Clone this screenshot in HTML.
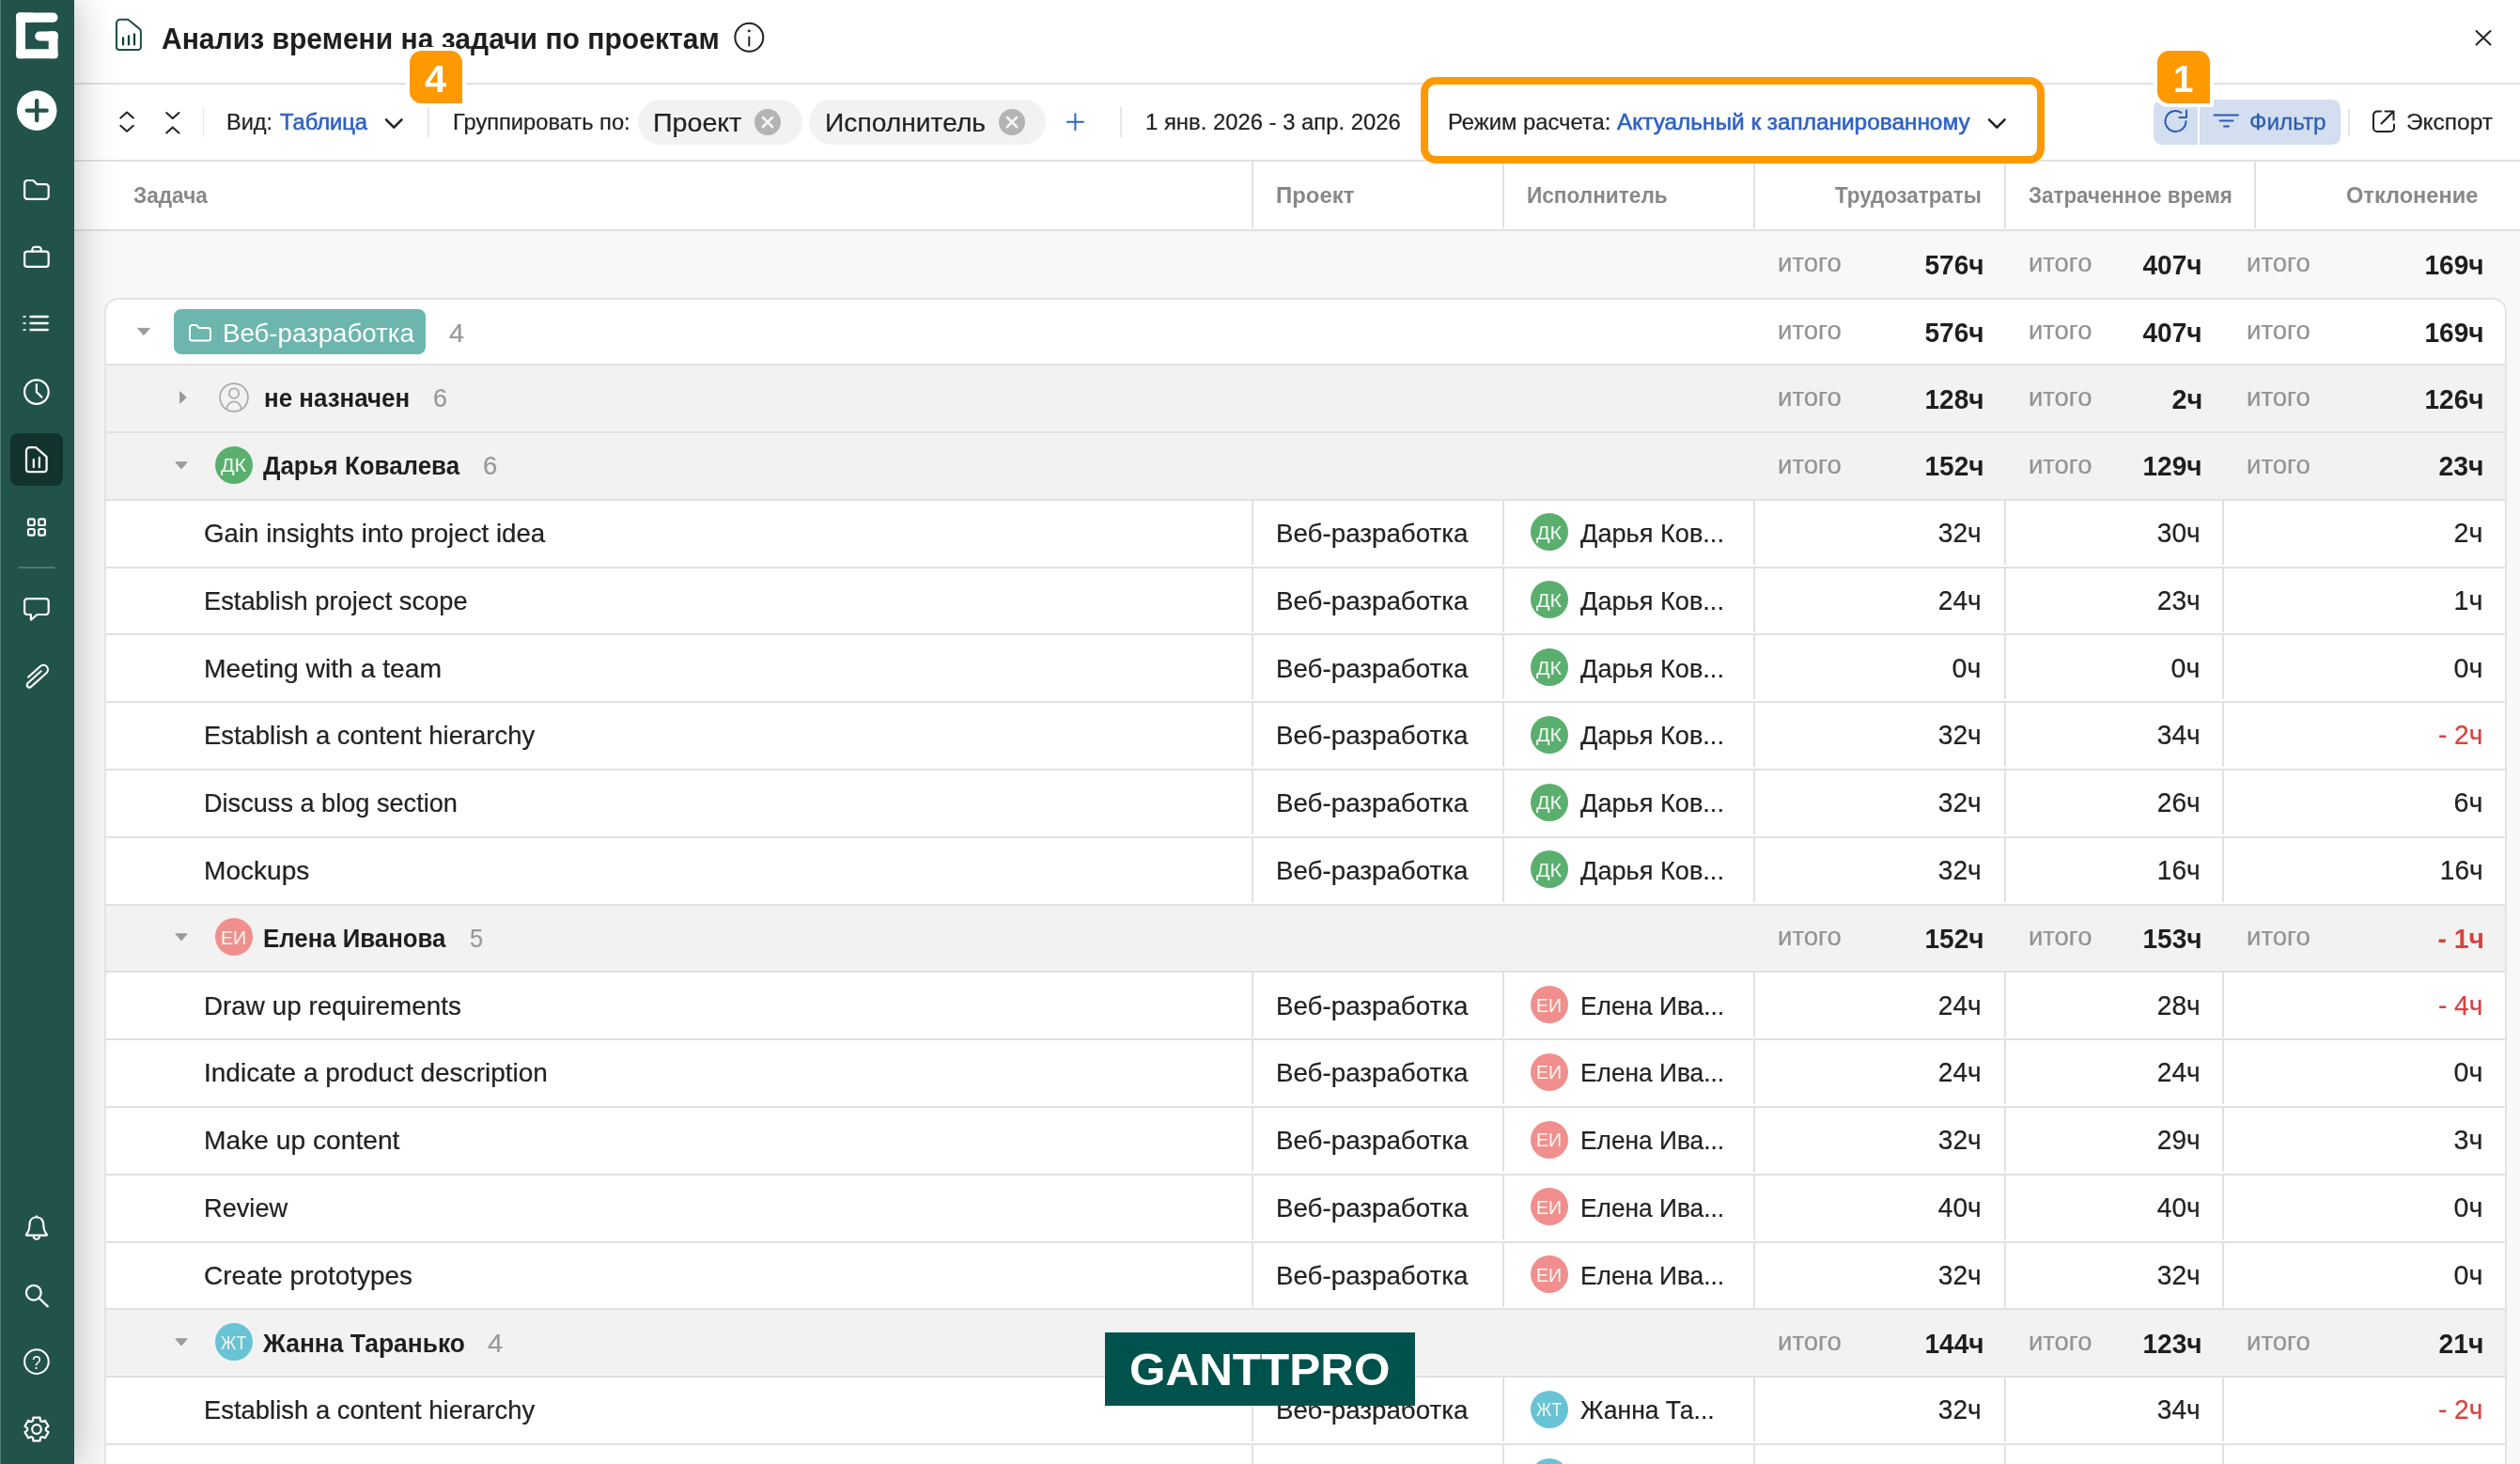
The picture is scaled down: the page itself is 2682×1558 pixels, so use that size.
<!DOCTYPE html>
<html lang="ru"><head><meta charset="utf-8"><title>Анализ времени на задачи по проектам</title>
<style>
html,body{margin:0;padding:0;}
body{width:2682px;height:1558px;overflow:hidden;position:relative;background:#f8f8f8;font-family:"Liberation Sans",sans-serif;}
#root{position:absolute;left:0;top:0;width:2682px;height:1558px;overflow:hidden;will-change:transform;}
.t{position:absolute;white-space:nowrap;line-height:1;display:inline-block;}
.wm{letter-spacing:0;}
</style></head><body><div id="root">
<div class="" style="position:absolute;left:79.00px;top:0.00px;width:2603.00px;height:88.00px;background:#fff;"></div>
<div class="" style="position:absolute;left:79.00px;top:88.00px;width:2603.00px;height:2.00px;background:#e1e1e1;"></div>
<div class="" style="position:absolute;left:79.00px;top:90.00px;width:2603.00px;height:80.00px;background:#fff;"></div>
<div class="" style="position:absolute;left:79.00px;top:169.60px;width:2603.00px;height:2.00px;background:#e1e1e1;"></div>
<div class="" style="position:absolute;left:79.00px;top:172.00px;width:2603.00px;height:71.50px;background:#fff;"></div>
<div class="" style="position:absolute;left:79.00px;top:243.50px;width:2603.00px;height:2.00px;background:#e1e1e1;"></div>
<div class="" style="position:absolute;left:1332.00px;top:172.00px;width:2.00px;height:71.00px;background:#e1e1e1;"></div>
<div class="" style="position:absolute;left:1599.00px;top:172.00px;width:2.00px;height:71.00px;background:#e1e1e1;"></div>
<div class="" style="position:absolute;left:1866.00px;top:172.00px;width:2.00px;height:71.00px;background:#e1e1e1;"></div>
<div class="" style="position:absolute;left:2133.00px;top:172.00px;width:2.00px;height:71.00px;background:#e1e1e1;"></div>
<div class="" style="position:absolute;left:2399.00px;top:172.00px;width:2.00px;height:71.00px;background:#e1e1e1;"></div>
<svg style="position:absolute;left:120px;top:16px" width="36" height="42" viewBox="0 0 36 42" fill="none" stroke="#1d5048" stroke-width="2" stroke-linecap="round" stroke-linejoin="round"><path d="M8 4.8 H15.4 Q16.4 4.8 17.2 5.5 L28.4 14.6 Q29.9 15.9 29.9 18 V34 a3 3 0 0 1 -3 3 H7 a3 3 0 0 1 -3 -3 V8.8 a4 4 0 0 1 4 -4 Z"/><path d="M11 24.4 V31.4 M17 22.4 V31.4 M23 20.3 V31.4" stroke-width="2.3" stroke="#123f38"/></svg>
<span class="t " style="top:25.01px;font-size:32px;color:#1e1e1e;font-weight:700;left:172.34px;transform-origin:0 50%;transform:scaleX(0.9395);">Анализ времени на задачи по проектам</span>
<svg style="position:absolute;left:780px;top:23px" width="34" height="34" viewBox="0 0 34 34" fill="none" stroke="#222" stroke-width="2" stroke-linecap="round"><circle cx="17.3" cy="16.8" r="14.95"/><path d="M17.3 16.5 V25.5"/><circle cx="17.3" cy="9.9" r="1.45" fill="#222" stroke="none"/></svg>
<svg style="position:absolute;left:2633px;top:30px" width="20" height="20" viewBox="0 0 20 20" fill="none" stroke="#222" stroke-width="2" stroke-linecap="round"><path d="M2.5 3 L17.5 17.5 M17.5 3 L2.5 17.5"/></svg>
<svg style="position:absolute;left:125px;top:116px" width="20" height="28" viewBox="0 0 20 28" fill="none" stroke="#222" stroke-width="2" stroke-linecap="round" stroke-linejoin="round"><path d="M3.3 9.6 L10.1 3.5 L16.9 9.6 M3.3 17.8 L10.1 23.7 L16.9 17.8"/></svg>
<svg style="position:absolute;left:174px;top:116px" width="20" height="28" viewBox="0 0 20 28" fill="none" stroke="#222" stroke-width="2" stroke-linecap="round" stroke-linejoin="round"><path d="M3.2 4 L9.75 10.1 L16.5 4 M3.2 25.5 L9.75 19.4 L16.5 25.5"/></svg>
<div class="" style="position:absolute;left:215.60px;top:114.00px;width:1.80px;height:31.50px;background:#e7e7e7;"></div>
<span class="t " style="top:118.48px;font-size:24px;color:#222222;-webkit-text-stroke:0.22px #222222;left:241.28px;transform-origin:0 50%;transform:scaleX(0.9811);">Вид:</span>
<span class="t " style="top:118.48px;font-size:24px;color:#2f62c4;-webkit-text-stroke:0.6px #2f62c4;left:298.48px;transform-origin:0 50%;transform:scaleX(0.9887);">Таблица</span>
<svg style="position:absolute;left:406px;top:122px" width="26" height="18" viewBox="0 0 26 18" fill="none" stroke="#222" stroke-width="2.6" stroke-linecap="round" stroke-linejoin="round"><path d="M5 5.3 L13.25 13.6 L21.5 5.3"/></svg>
<div class="" style="position:absolute;left:455.20px;top:114.00px;width:1.80px;height:31.50px;background:#e7e7e7;"></div>
<span class="t " style="top:118.48px;font-size:24px;color:#222222;-webkit-text-stroke:0.22px #222222;left:481.88px;transform-origin:0 50%;transform:scaleX(0.9861);">Группировать по:</span>
<div class="" style="position:absolute;left:678.60px;top:105.50px;width:175.00px;height:48.00px;background:#f2f2f2;border-radius:24px;"></div>
<span class="t " style="top:116.70px;font-size:28px;color:#222222;-webkit-text-stroke:0.22px #222222;left:695.16px;transform-origin:0 50%;transform:scaleX(1.0221);">Проект</span>
<svg style="position:absolute;left:803.0px;top:115.6px" width="28" height="28" viewBox="0 0 28 28"><circle cx="14" cy="14" r="14" fill="#b4b4b4"/><path d="M9 9 L19 19 M19 9 L9 19" stroke="#f6f6f6" stroke-width="2.6" stroke-linecap="round"/></svg>
<div class="" style="position:absolute;left:861.20px;top:105.50px;width:252.00px;height:48.00px;background:#f2f2f2;border-radius:24px;"></div>
<span class="t " style="top:116.70px;font-size:28px;color:#222222;-webkit-text-stroke:0.22px #222222;left:877.76px;transform-origin:0 50%;transform:scaleX(1.0076);">Исполнитель</span>
<svg style="position:absolute;left:1062.8px;top:115.6px" width="28" height="28" viewBox="0 0 28 28"><circle cx="14" cy="14" r="14" fill="#b4b4b4"/><path d="M9 9 L19 19 M19 9 L9 19" stroke="#f6f6f6" stroke-width="2.6" stroke-linecap="round"/></svg>
<svg style="position:absolute;left:1132px;top:117px" width="25" height="25" viewBox="0 0 25 25" fill="none" stroke="#2f62c4" stroke-width="2" stroke-linecap="round"><path d="M12.4 4.2 V21.2 M3.9 12.7 H20.9"/></svg>
<div class="" style="position:absolute;left:1192.40px;top:114.00px;width:1.80px;height:31.50px;background:#e7e7e7;"></div>
<span class="t " style="top:118.48px;font-size:24px;color:#222222;-webkit-text-stroke:0.22px #222222;left:1218.88px;transform-origin:0 50%;transform:scaleX(0.9939);">1 янв. 2026 - 3 апр. 2026</span>
<div class="" style="position:absolute;left:1512.00px;top:82.40px;width:663.80px;height:91.30px;border:8px solid #ff9900;border-radius:16px;background:#fff;box-sizing:border-box;"></div>
<span class="t " style="top:118.48px;font-size:24px;color:#222222;-webkit-text-stroke:0.22px #222222;left:1540.58px;transform-origin:0 50%;transform:scaleX(0.9912);">Режим расчета:</span>
<span class="t " style="top:118.48px;font-size:24px;color:#2f62c4;-webkit-text-stroke:0.6px #2f62c4;left:1720.88px;transform-origin:0 50%;transform:scaleX(1.0156);">Актуальный к запланированному</span>
<svg style="position:absolute;left:2112px;top:122px" width="26" height="18" viewBox="0 0 26 18" fill="none" stroke="#222" stroke-width="2.6" stroke-linecap="round" stroke-linejoin="round"><path d="M5 5.3 L13.3 13.6 L21.6 5.3"/></svg>
<div class="" style="position:absolute;left:2291.70px;top:106.00px;width:47.80px;height:47.50px;background:#d3def0;border-radius:9px 0 0 9px;"></div>
<div class="" style="position:absolute;left:2341.40px;top:106.00px;width:149.60px;height:47.50px;background:#d3def0;border-radius:0 9px 9px 0;"></div>
<svg style="position:absolute;left:2300px;top:113px" width="32" height="32" viewBox="0 0 32 32" fill="none" stroke="#2d5cae" stroke-width="2" stroke-linecap="round" stroke-linejoin="round"><path d="M26.5 16 A11 11 0 1 1 21.5 6.8"/><path d="M27 4.5 V12 H19.5" /></svg>
<svg style="position:absolute;left:2353px;top:118px" width="32" height="22" viewBox="0 0 32 22" fill="none" stroke="#2d5cae" stroke-width="2" stroke-linecap="round"><path d="M3.5 4.5 H29 M9.5 10.6 H23.5 M14 16.6 H19"/></svg>
<span class="t " style="top:117.58px;font-size:24px;color:#2d5cae;-webkit-text-stroke:0.3px #2d5cae;left:2393.58px;transform-origin:0 50%;transform:scaleX(1.0113);">Фильтр</span>
<div class="" style="position:absolute;left:2499.10px;top:115.50px;width:1.80px;height:28.00px;background:#e7e7e7;"></div>
<svg style="position:absolute;left:2523px;top:115px" width="28" height="28" viewBox="0 0 28 28" fill="none" stroke="#222" stroke-width="2" stroke-linecap="round" stroke-linejoin="round"><path d="M11 3.5 H7 a4 4 0 0 0 -4 4 V21 a4 4 0 0 0 4 4 H21 a4 4 0 0 0 4 -4 V17.5"/><path d="M15.5 3.5 H24.5 V12.5 M24 4 L11.5 16.5"/></svg>
<span class="t " style="top:118.48px;font-size:24px;color:#222222;-webkit-text-stroke:0.22px #222222;left:2560.78px;transform-origin:0 50%;transform:scaleX(1.0196);">Экспорт</span>
<div class="" style="position:absolute;left:432.20px;top:49.80px;width:64.00px;height:64.00px;background:#fff;border-radius:16px 16px 0 16px;"></div>
<div class="" style="position:absolute;left:436.20px;top:53.80px;width:56.00px;height:56.00px;background:#ff9900;border-radius:12.5px 12.5px 0 12.5px;"></div>
<span class="t " style="top:63.94px;font-size:40px;color:#fff;font-weight:700;left:452.10px;transform-origin:0 50%;transform:scaleX(1.0384);">4</span>
<div class="" style="position:absolute;left:2292.20px;top:50.00px;width:64.00px;height:64.00px;background:#fff;border-radius:16px 16px 0 16px;"></div>
<div class="" style="position:absolute;left:2296.20px;top:54.00px;width:56.00px;height:56.00px;background:#ff9900;border-radius:12.5px 12.5px 0 12.5px;"></div>
<span class="t " style="top:63.94px;font-size:40px;color:#fff;font-weight:700;left:2312.80px;transform-origin:0 50%;transform:scaleX(0.9620);">1</span>
<span class="t " style="top:196.08px;font-size:24px;color:#888888;font-weight:700;left:142.28px;transform-origin:0 50%;transform:scaleX(0.9425);">Задача</span>
<span class="t " style="top:196.08px;font-size:24px;color:#888888;font-weight:700;left:1358.28px;transform-origin:0 50%;transform:scaleX(0.9971);">Проект</span>
<span class="t " style="top:196.08px;font-size:24px;color:#888888;font-weight:700;left:1624.98px;transform-origin:0 50%;transform:scaleX(0.9432);">Исполнитель</span>
<span class="t " style="top:196.08px;font-size:24px;color:#888888;font-weight:700;left:1952.68px;transform-origin:0 50%;transform:scaleX(0.9304);">Трудозатраты</span>
<span class="t " style="top:196.08px;font-size:24px;color:#888888;font-weight:700;left:2158.78px;transform-origin:0 50%;transform:scaleX(0.9318);">Затраченное время</span>
<span class="t " style="top:196.08px;font-size:24px;color:#888888;font-weight:700;left:2496.68px;transform-origin:0 50%;transform:scaleX(0.9831);">Отклонение</span>
<span class="t " style="top:267.24px;font-size:27px;color:#939393;-webkit-text-stroke:0.22px #939393;left:1891.79px;transform-origin:0 50%;transform:scaleX(1.0209);">итого</span>
<span class="t " style="top:267.24px;font-size:27px;color:#939393;-webkit-text-stroke:0.22px #939393;left:2159.29px;transform-origin:0 50%;transform:scaleX(1.0164);">итого</span>
<span class="t " style="top:267.24px;font-size:27px;color:#939393;-webkit-text-stroke:0.22px #939393;left:2391.49px;transform-origin:0 50%;transform:scaleX(1.0224);">итого</span>
<span class="t " style="top:267.98px;font-size:29.2px;color:#1e1e1e;font-weight:700;right:570.12px;transform-origin:100% 50%;transform:scaleX(0.9618);">576ч</span>
<span class="t " style="top:267.98px;font-size:29.2px;color:#1e1e1e;font-weight:700;right:338.02px;transform-origin:100% 50%;transform:scaleX(0.9618);">407ч</span>
<span class="t " style="top:267.98px;font-size:29.2px;color:#1e1e1e;font-weight:700;right:38.42px;transform-origin:100% 50%;transform:scaleX(0.9618);">169ч</span>
<div id="sb" style="position:absolute;left:0;top:0;width:79px;height:1558px;background:#22534b;box-shadow:2px 0 40px rgba(0,0,0,.25);"></div><div style="position:absolute;left:0;top:0;width:1.2px;height:1558px;background:#4d7c74;"></div>
<svg style="position:absolute;left:0px;top:0px" width="79" height="76" viewBox="0 0 79 76" fill="#fff"><rect x="17.2" y="13.6" width="44.3" height="10.1" rx="5"/><rect x="17.2" y="13.6" width="20" height="10.1" rx="3.5"/><rect x="17.2" y="13.6" width="9.8" height="48.6" rx="3.5"/><rect x="17.2" y="52.2" width="44.3" height="10" rx="3.5"/><rect x="51.7" y="33.5" width="9.8" height="28.7" rx="3.5"/><rect x="37.2" y="33.5" width="24.3" height="10" rx="5"/><rect x="48" y="33.5" width="13.5" height="10" rx="3.5"/></svg>
<svg style="position:absolute;left:17px;top:95px" width="45" height="45" viewBox="0 0 45 45"><circle cx="22.2" cy="22.6" r="21.3" fill="#fff"/><path d="M22.2 12.2 V33 M11.9 22.6 H32.6" stroke="#22534b" stroke-width="4.4" stroke-linecap="round"/></svg>
<svg style="position:absolute;left:23.3px;top:186.3px" width="32" height="32" viewBox="0 0 32 32" fill="none" stroke="#fff" stroke-width="2.2" stroke-linecap="round" stroke-linejoin="round"><path d="M3.1 9 a3 3 0 0 1 3 -3 H12.2 L16.6 10.1 H25.7 a3 3 0 0 1 3 3 V22.8 a3 3 0 0 1 -3 3 H6.1 a3 3 0 0 1 -3 -3 Z"/></svg>
<svg style="position:absolute;left:23.3px;top:257.3px" width="32" height="32" viewBox="0 0 32 32" fill="none" stroke="#fff" stroke-width="2.2" stroke-linecap="round" stroke-linejoin="round"><rect x="3.1" y="10.6" width="25.6" height="16.3" rx="3"/><path d="M11.4 10.6 V8.3 a2.5 2.5 0 0 1 2.5 -2.5 H18.2 a2.5 2.5 0 0 1 2.5 2.5 V10.6"/></svg>
<svg style="position:absolute;left:23.3px;top:328.0px" width="32" height="32" viewBox="0 0 32 32" fill="none" stroke="#fff" stroke-width="2" stroke-linecap="round" stroke-linejoin="round"><path d="M9.4 9 H27.8 M9.4 16 H27.8 M9.4 23 H27.8" stroke-width="2.3"/><path d="M2.6 9 H3.4 M2.6 16 H3.4 M2.6 23 H3.4" stroke-width="2.2" stroke-linecap="square" opacity=".85"/></svg>
<svg style="position:absolute;left:23.3px;top:400.7px" width="32" height="32" viewBox="0 0 32 32" fill="none" stroke="#fff" stroke-width="2.2" stroke-linecap="round" stroke-linejoin="round"><circle cx="15.9" cy="16.1" r="12.8"/><path d="M15.9 8.2 V16.2 L21.4 21.6"/></svg>
<div class="" style="position:absolute;left:11.30px;top:460.80px;width:55.80px;height:55.80px;background:#13342e;border-radius:8px;"></div>
<svg style="position:absolute;left:23.3px;top:472.7px" width="32" height="32" viewBox="0 0 32 32" fill="none" stroke="#fff" stroke-width="2.2" stroke-linecap="round" stroke-linejoin="round"><path d="M8.5 3.2 H15.1 L26.6 13.2 V26.2 a3 3 0 0 1 -3 3 H8 a3 3 0 0 1 -3 -3 V6.7 a3.5 3.5 0 0 1 3.5 -3.5 Z"/><path d="M12.8 16.2 V24.2 M18.9 13.9 V24.2"/></svg>
<svg style="position:absolute;left:23.3px;top:544.7px" width="32" height="32" viewBox="0 0 32 32" fill="none" stroke="#fff" stroke-width="2.2" stroke-linecap="round" stroke-linejoin="round"><rect x="7" y="7.3" width="6.7" height="6.7" rx="1.6"/><rect x="18.2" y="7.3" width="6.7" height="6.7" rx="1.6"/><rect x="7" y="18" width="6.7" height="6.7" rx="1.6"/><rect x="18.2" y="18" width="6.7" height="6.7" rx="1.6"/></svg>
<div class="" style="position:absolute;left:19.30px;top:603.40px;width:40.00px;height:2.00px;background:#4a7a72;border-radius:1px;"></div>
<svg style="position:absolute;left:23.3px;top:632.2px" width="32" height="32" viewBox="0 0 32 32" fill="none" stroke="#fff" stroke-width="2.2" stroke-linecap="round" stroke-linejoin="round"><path d="M6.1 5.2 H25.7 a3 3 0 0 1 3 3 V19 a3 3 0 0 1 -3 3 H16.7 L9.9 27.6 V22 H6.1 a3 3 0 0 1 -3 -3 V8.2 a3 3 0 0 1 3 -3 Z"/></svg>
<svg style="position:absolute;left:0;top:690px" width="79" height="60" viewBox="0 690 79 60" fill="none" stroke="#fff" stroke-width="2.1" stroke-linecap="round" stroke-linejoin="round"><g transform="translate(31,726.4) rotate(-42)"><path d="M3.2 -4.9 H20.5 A4.8 4.8 0 0 1 20.5 4.7 H-1.5 A2.6 2.6 0 0 1 -1.5 -0.5 H17.5"/></g></svg>
<svg style="position:absolute;left:23.3px;top:1291.0px" width="32" height="32" viewBox="0 0 32 32" fill="none" stroke="#fff" stroke-width="2.1" stroke-linecap="round" stroke-linejoin="round"><path d="M15.9 4.3 c-4.6 0 -7.4 3.4 -7.4 8 c0 5 -0.6 7 -3.4 10.2 c-0.5 0.6 -0.2 1.1 0.5 1.1 H26.2 c0.7 0 1 -0.5 0.5 -1.1 c-2.8 -3.2 -3.4 -5.2 -3.4 -10.2 c0 -4.6 -2.8 -8 -7.4 -8 Z"/><path d="M15.9 4.3 V3.4"/><path d="M12.6 24.2 a3.3 3.6 0 0 0 6.6 0"/></svg>
<svg style="position:absolute;left:23.3px;top:1362.7px" width="32" height="32" viewBox="0 0 32 32" fill="none" stroke="#fff" stroke-width="2.2" stroke-linecap="round" stroke-linejoin="round"><circle cx="12.8" cy="12.7" r="7.9"/><path d="M18.5 18.4 L27.8 27.4"/></svg>
<svg style="position:absolute;left:23.3px;top:1433.1px" width="32" height="32" viewBox="0 0 32 32" fill="none" stroke="#fff" stroke-width="2"><circle cx="15.9" cy="16.1" r="12.8"/></svg>
<span class="t " style="top:1439.67px;font-size:20px;color:#fff;left:34.40px;transform-origin:0 50%;transform:scaleX(0.8629);">?</span>
<svg style="position:absolute;left:23.3px;top:1505.0px" width="32" height="32" viewBox="0 0 32 32" fill="none" stroke="#fff" stroke-width="2.2" stroke-linecap="round" stroke-linejoin="round"><path d="M11.97 6.96 L12.44 3.60 L19.56 3.60 L20.03 6.96 L21.82 7.99 L24.96 6.72 L28.52 12.88 L25.85 14.97 L25.85 17.03 L28.52 19.12 L24.96 25.28 L21.82 24.01 L20.03 25.04 L19.56 28.40 L12.44 28.40 L11.97 25.04 L10.18 24.01 L7.04 25.28 L3.48 19.12 L6.15 17.03 L6.15 14.97 L3.48 12.88 L7.04 6.72 L10.18 7.99 Z" stroke-linejoin="round"/><circle cx="16" cy="16" r="4.8"/></svg>
<div class="" style="position:absolute;left:111.20px;top:317.20px;width:2556.60px;height:1271.00px;background:#fff;border:2px solid #e3e3e3;border-radius:15px;box-sizing:border-box;"></div>
<div class="" style="position:absolute;left:112.80px;top:387.09px;width:2553.40px;height:2.00px;background:#e1e1e1;"></div>
<svg style="position:absolute;left:140px;top:340px" width="26" height="26" viewBox="0 0 26 26"><polygon points="6.6,9.4 19.3,9.4 12.95,16.6" fill="#9b9b9b" stroke="#9b9b9b" stroke-width="1" stroke-linejoin="round"/></svg>
<div class="" style="position:absolute;left:184.90px;top:329.00px;width:268.10px;height:48.00px;background:#6cb6ad;border-radius:8px;"></div>
<svg style="position:absolute;left:199px;top:343px" width="28" height="22" viewBox="0 0 28 22" fill="none" stroke="#fff" stroke-width="2" stroke-linejoin="round"><path d="M3 5.5 a2.5 2.5 0 0 1 2.5 -2.5 H10 L13 6 H22.5 a2.5 2.5 0 0 1 2.5 2.5 V17 a2.5 2.5 0 0 1 -2.5 2.5 H5.5 a2.5 2.5 0 0 1 -2.5 -2.5 Z"/></svg>
<span class="t " style="top:340.60px;font-size:28px;color:#fff;left:237.36px;transform-origin:0 50%;transform:scaleX(0.9878);">Веб-разработка</span>
<span class="t " style="top:340.60px;font-size:28px;color:#999999;-webkit-text-stroke:0.22px #999999;left:477.76px;transform-origin:0 50%;transform:scaleX(1.0261);">4</span>
<span class="t " style="top:339.09px;font-size:27px;color:#939393;-webkit-text-stroke:0.22px #939393;left:1891.79px;transform-origin:0 50%;transform:scaleX(1.0209);">итого</span>
<span class="t " style="top:339.09px;font-size:27px;color:#939393;-webkit-text-stroke:0.22px #939393;left:2159.29px;transform-origin:0 50%;transform:scaleX(1.0164);">итого</span>
<span class="t " style="top:339.09px;font-size:27px;color:#939393;-webkit-text-stroke:0.22px #939393;left:2391.49px;transform-origin:0 50%;transform:scaleX(1.0224);">итого</span>
<span class="t " style="top:339.83px;font-size:29.2px;color:#1e1e1e;font-weight:700;right:570.12px;transform-origin:100% 50%;transform:scaleX(0.9618);">576ч</span>
<span class="t " style="top:339.83px;font-size:29.2px;color:#1e1e1e;font-weight:700;right:338.02px;transform-origin:100% 50%;transform:scaleX(0.9618);">407ч</span>
<span class="t " style="top:339.83px;font-size:29.2px;color:#1e1e1e;font-weight:700;right:38.42px;transform-origin:100% 50%;transform:scaleX(0.9618);">169ч</span>
<div class="" style="position:absolute;left:112.80px;top:389.09px;width:2553.40px;height:69.81px;background:#f2f2f2;"></div>
<div class="" style="position:absolute;left:112.80px;top:458.90px;width:2553.40px;height:2.00px;background:#e1e1e1;"></div>
<svg style="position:absolute;left:182px;top:410.49px" width="26" height="26" viewBox="0 0 26 26"><polygon points="9.6,6.8 9.6,19.2 16.2,13" fill="#9b9b9b" stroke="#9b9b9b" stroke-width="1" stroke-linejoin="round"/></svg>
<svg style="position:absolute;left:231.9px;top:405.79px" width="34" height="34" viewBox="0 0 34 34" fill="none" stroke="#ababab" stroke-width="1.7"><defs><clipPath id="cp2"><circle cx="17" cy="17" r="14.9"/></clipPath></defs><circle cx="17" cy="17" r="14.9"/><circle cx="17" cy="12.6" r="5.2"/><ellipse cx="17" cy="30" rx="7.8" ry="8.6" clip-path="url(#cp2)"/></svg>
<span class="t " style="top:410.29px;font-size:28px;color:#1e1e1e;font-weight:700;left:280.56px;transform-origin:0 50%;transform:scaleX(0.9255);">не назначен</span>
<span class="t " style="top:410.29px;font-size:28px;color:#999999;-webkit-text-stroke:0.22px #999999;left:460.96px;transform-origin:0 50%;transform:scaleX(0.9554);">6</span>
<span class="t " style="top:409.94px;font-size:27px;color:#939393;-webkit-text-stroke:0.22px #939393;left:1891.79px;transform-origin:0 50%;transform:scaleX(1.0209);">итого</span>
<span class="t " style="top:409.94px;font-size:27px;color:#939393;-webkit-text-stroke:0.22px #939393;left:2159.29px;transform-origin:0 50%;transform:scaleX(1.0164);">итого</span>
<span class="t " style="top:409.94px;font-size:27px;color:#939393;-webkit-text-stroke:0.22px #939393;left:2391.49px;transform-origin:0 50%;transform:scaleX(1.0224);">итого</span>
<span class="t " style="top:410.67px;font-size:29.2px;color:#1e1e1e;font-weight:700;right:570.12px;transform-origin:100% 50%;transform:scaleX(0.9618);">128ч</span>
<span class="t " style="top:410.67px;font-size:29.2px;color:#1e1e1e;font-weight:700;right:338.02px;transform-origin:100% 50%;transform:scaleX(0.9879);">2ч</span>
<span class="t " style="top:410.67px;font-size:29.2px;color:#1e1e1e;font-weight:700;right:38.42px;transform-origin:100% 50%;transform:scaleX(0.9618);">126ч</span>
<div class="" style="position:absolute;left:112.80px;top:460.90px;width:2553.40px;height:69.81px;background:#f2f2f2;"></div>
<div class="" style="position:absolute;left:112.80px;top:530.70px;width:2553.40px;height:2.00px;background:#e1e1e1;"></div>
<svg style="position:absolute;left:180px;top:481.60px" width="26" height="26" viewBox="0 0 26 26"><polygon points="6.8,9.8 19.2,9.8 13,16.9" fill="#9b9b9b" stroke="#9b9b9b" stroke-width="1" stroke-linejoin="round"/></svg>
<div class="" style="position:absolute;left:229.10px;top:474.70px;width:40.00px;height:40.00px;background:#5aaf6e;border-radius:50%;"></div>
<span class="t " style="top:486.06px;font-size:19.3px;color:#f1f8f2;left:235.32px;transform-origin:0 50%;transform:scaleX(1.1170);">ДК</span>
<span class="t " style="top:482.10px;font-size:28px;color:#1e1e1e;font-weight:700;left:279.96px;transform-origin:0 50%;transform:scaleX(0.9251);">Дарья Ковалева</span>
<span class="t " style="top:482.10px;font-size:28px;color:#999999;-webkit-text-stroke:0.22px #999999;left:514.16px;transform-origin:0 50%;transform:scaleX(0.9811);">6</span>
<span class="t " style="top:481.74px;font-size:27px;color:#939393;-webkit-text-stroke:0.22px #939393;left:1891.79px;transform-origin:0 50%;transform:scaleX(1.0209);">итого</span>
<span class="t " style="top:481.74px;font-size:27px;color:#939393;-webkit-text-stroke:0.22px #939393;left:2159.29px;transform-origin:0 50%;transform:scaleX(1.0164);">итого</span>
<span class="t " style="top:481.74px;font-size:27px;color:#939393;-webkit-text-stroke:0.22px #939393;left:2391.49px;transform-origin:0 50%;transform:scaleX(1.0224);">итого</span>
<span class="t " style="top:482.48px;font-size:29.2px;color:#1e1e1e;font-weight:700;right:570.12px;transform-origin:100% 50%;transform:scaleX(0.9618);">152ч</span>
<span class="t " style="top:482.48px;font-size:29.2px;color:#1e1e1e;font-weight:700;right:338.02px;transform-origin:100% 50%;transform:scaleX(0.9618);">129ч</span>
<span class="t " style="top:482.48px;font-size:29.2px;color:#1e1e1e;font-weight:700;right:38.42px;transform-origin:100% 50%;transform:scaleX(0.9705);">23ч</span>
<div class="" style="position:absolute;left:112.80px;top:602.51px;width:2553.40px;height:2.00px;background:#e1e1e1;"></div>
<div class="" style="position:absolute;left:1332.30px;top:532.70px;width:2.00px;height:68.21px;background:#e1e1e1;"></div>
<div class="" style="position:absolute;left:1599.00px;top:532.70px;width:2.00px;height:68.21px;background:#e1e1e1;"></div>
<div class="" style="position:absolute;left:1865.70px;top:532.70px;width:2.00px;height:68.21px;background:#e1e1e1;"></div>
<div class="" style="position:absolute;left:2132.80px;top:532.70px;width:2.00px;height:68.21px;background:#e1e1e1;"></div>
<div class="" style="position:absolute;left:2365.30px;top:532.70px;width:2.00px;height:68.21px;background:#e1e1e1;"></div>
<span class="t " style="top:554.00px;font-size:28px;color:#222222;-webkit-text-stroke:0.22px #222222;left:216.76px;transform-origin:0 50%;transform:scaleX(0.9889);">Gain insights into project idea</span>
<span class="t " style="top:554.00px;font-size:28px;color:#222222;-webkit-text-stroke:0.22px #222222;left:1358.46px;transform-origin:0 50%;transform:scaleX(0.9907);">Веб-разработка</span>
<div class="" style="position:absolute;left:1629.10px;top:546.40px;width:40.00px;height:40.00px;background:#5aaf6e;border-radius:50%;"></div>
<span class="t " style="top:557.97px;font-size:19.3px;color:#f1f8f2;left:1635.32px;transform-origin:0 50%;transform:scaleX(1.1170);">ДК</span>
<span class="t " style="top:554.00px;font-size:28px;color:#222222;-webkit-text-stroke:0.22px #222222;left:1681.66px;transform-origin:0 50%;transform:scaleX(0.9697);">Дарья Ков...</span>
<span class="t " style="top:552.98px;font-size:29.2px;color:#222222;-webkit-text-stroke:0.22px #222222;right:573.32px;transform-origin:100% 50%;transform:scaleX(0.9623);">32ч</span>
<span class="t " style="top:552.98px;font-size:29.2px;color:#222222;-webkit-text-stroke:0.22px #222222;right:340.72px;transform-origin:100% 50%;transform:scaleX(0.9623);">30ч</span>
<span class="t " style="top:552.98px;font-size:29.2px;color:#222222;-webkit-text-stroke:0.22px #222222;right:39.32px;transform-origin:100% 50%;transform:scaleX(0.9813);">2ч</span>
<div class="" style="position:absolute;left:112.80px;top:674.31px;width:2553.40px;height:2.00px;background:#e1e1e1;"></div>
<div class="" style="position:absolute;left:1332.30px;top:604.51px;width:2.00px;height:68.20px;background:#e1e1e1;"></div>
<div class="" style="position:absolute;left:1599.00px;top:604.51px;width:2.00px;height:68.20px;background:#e1e1e1;"></div>
<div class="" style="position:absolute;left:1865.70px;top:604.51px;width:2.00px;height:68.20px;background:#e1e1e1;"></div>
<div class="" style="position:absolute;left:2132.80px;top:604.51px;width:2.00px;height:68.20px;background:#e1e1e1;"></div>
<div class="" style="position:absolute;left:2365.30px;top:604.51px;width:2.00px;height:68.20px;background:#e1e1e1;"></div>
<span class="t " style="top:625.81px;font-size:28px;color:#222222;-webkit-text-stroke:0.22px #222222;left:216.76px;transform-origin:0 50%;transform:scaleX(0.9747);">Establish project scope</span>
<span class="t " style="top:625.81px;font-size:28px;color:#222222;-webkit-text-stroke:0.22px #222222;left:1358.46px;transform-origin:0 50%;transform:scaleX(0.9907);">Веб-разработка</span>
<div class="" style="position:absolute;left:1629.10px;top:618.21px;width:40.00px;height:40.00px;background:#5aaf6e;border-radius:50%;"></div>
<span class="t " style="top:629.77px;font-size:19.3px;color:#f1f8f2;left:1635.32px;transform-origin:0 50%;transform:scaleX(1.1170);">ДК</span>
<span class="t " style="top:625.81px;font-size:28px;color:#222222;-webkit-text-stroke:0.22px #222222;left:1681.66px;transform-origin:0 50%;transform:scaleX(0.9697);">Дарья Ков...</span>
<span class="t " style="top:624.79px;font-size:29.2px;color:#222222;-webkit-text-stroke:0.22px #222222;right:573.32px;transform-origin:100% 50%;transform:scaleX(0.9623);">24ч</span>
<span class="t " style="top:624.79px;font-size:29.2px;color:#222222;-webkit-text-stroke:0.22px #222222;right:340.72px;transform-origin:100% 50%;transform:scaleX(0.9623);">23ч</span>
<span class="t " style="top:624.79px;font-size:29.2px;color:#222222;-webkit-text-stroke:0.22px #222222;right:39.32px;transform-origin:100% 50%;transform:scaleX(0.9813);">1ч</span>
<div class="" style="position:absolute;left:112.80px;top:746.12px;width:2553.40px;height:2.00px;background:#e1e1e1;"></div>
<div class="" style="position:absolute;left:1332.30px;top:676.31px;width:2.00px;height:68.20px;background:#e1e1e1;"></div>
<div class="" style="position:absolute;left:1599.00px;top:676.31px;width:2.00px;height:68.20px;background:#e1e1e1;"></div>
<div class="" style="position:absolute;left:1865.70px;top:676.31px;width:2.00px;height:68.20px;background:#e1e1e1;"></div>
<div class="" style="position:absolute;left:2132.80px;top:676.31px;width:2.00px;height:68.20px;background:#e1e1e1;"></div>
<div class="" style="position:absolute;left:2365.30px;top:676.31px;width:2.00px;height:68.20px;background:#e1e1e1;"></div>
<span class="t " style="top:697.61px;font-size:28px;color:#222222;-webkit-text-stroke:0.22px #222222;left:216.76px;transform-origin:0 50%;transform:scaleX(1.0103);">Meeting with a team</span>
<span class="t " style="top:697.61px;font-size:28px;color:#222222;-webkit-text-stroke:0.22px #222222;left:1358.46px;transform-origin:0 50%;transform:scaleX(0.9907);">Веб-разработка</span>
<div class="" style="position:absolute;left:1629.10px;top:690.01px;width:40.00px;height:40.00px;background:#5aaf6e;border-radius:50%;"></div>
<span class="t " style="top:701.58px;font-size:19.3px;color:#f1f8f2;left:1635.32px;transform-origin:0 50%;transform:scaleX(1.1170);">ДК</span>
<span class="t " style="top:697.61px;font-size:28px;color:#222222;-webkit-text-stroke:0.22px #222222;left:1681.66px;transform-origin:0 50%;transform:scaleX(0.9697);">Дарья Ков...</span>
<span class="t " style="top:696.59px;font-size:29.2px;color:#222222;-webkit-text-stroke:0.22px #222222;right:573.32px;transform-origin:100% 50%;transform:scaleX(0.9813);">0ч</span>
<span class="t " style="top:696.59px;font-size:29.2px;color:#222222;-webkit-text-stroke:0.22px #222222;right:340.72px;transform-origin:100% 50%;transform:scaleX(0.9813);">0ч</span>
<span class="t " style="top:696.59px;font-size:29.2px;color:#222222;-webkit-text-stroke:0.22px #222222;right:39.32px;transform-origin:100% 50%;transform:scaleX(0.9813);">0ч</span>
<div class="" style="position:absolute;left:112.80px;top:817.92px;width:2553.40px;height:2.00px;background:#e1e1e1;"></div>
<div class="" style="position:absolute;left:1332.30px;top:748.12px;width:2.00px;height:68.21px;background:#e1e1e1;"></div>
<div class="" style="position:absolute;left:1599.00px;top:748.12px;width:2.00px;height:68.21px;background:#e1e1e1;"></div>
<div class="" style="position:absolute;left:1865.70px;top:748.12px;width:2.00px;height:68.21px;background:#e1e1e1;"></div>
<div class="" style="position:absolute;left:2132.80px;top:748.12px;width:2.00px;height:68.21px;background:#e1e1e1;"></div>
<div class="" style="position:absolute;left:2365.30px;top:748.12px;width:2.00px;height:68.21px;background:#e1e1e1;"></div>
<span class="t " style="top:769.42px;font-size:28px;color:#222222;-webkit-text-stroke:0.22px #222222;left:216.76px;transform-origin:0 50%;transform:scaleX(0.9794);">Establish a content hierarchy</span>
<span class="t " style="top:769.42px;font-size:28px;color:#222222;-webkit-text-stroke:0.22px #222222;left:1358.46px;transform-origin:0 50%;transform:scaleX(0.9907);">Веб-разработка</span>
<div class="" style="position:absolute;left:1629.10px;top:761.82px;width:40.00px;height:40.00px;background:#5aaf6e;border-radius:50%;"></div>
<span class="t " style="top:773.38px;font-size:19.3px;color:#f1f8f2;left:1635.32px;transform-origin:0 50%;transform:scaleX(1.1170);">ДК</span>
<span class="t " style="top:769.42px;font-size:28px;color:#222222;-webkit-text-stroke:0.22px #222222;left:1681.66px;transform-origin:0 50%;transform:scaleX(0.9697);">Дарья Ков...</span>
<span class="t " style="top:768.40px;font-size:29.2px;color:#222222;-webkit-text-stroke:0.22px #222222;right:573.32px;transform-origin:100% 50%;transform:scaleX(0.9623);">32ч</span>
<span class="t " style="top:768.40px;font-size:29.2px;color:#222222;-webkit-text-stroke:0.22px #222222;right:340.72px;transform-origin:100% 50%;transform:scaleX(0.9623);">34ч</span>
<span class="t " style="top:768.40px;font-size:29.2px;color:#d8433f;-webkit-text-stroke:0.22px #d8433f;right:39.32px;transform-origin:100% 50%;transform:scaleX(0.9611);">- 2ч</span>
<div class="" style="position:absolute;left:112.80px;top:889.73px;width:2553.40px;height:2.00px;background:#e1e1e1;"></div>
<div class="" style="position:absolute;left:1332.30px;top:819.92px;width:2.00px;height:68.21px;background:#e1e1e1;"></div>
<div class="" style="position:absolute;left:1599.00px;top:819.92px;width:2.00px;height:68.21px;background:#e1e1e1;"></div>
<div class="" style="position:absolute;left:1865.70px;top:819.92px;width:2.00px;height:68.21px;background:#e1e1e1;"></div>
<div class="" style="position:absolute;left:2132.80px;top:819.92px;width:2.00px;height:68.21px;background:#e1e1e1;"></div>
<div class="" style="position:absolute;left:2365.30px;top:819.92px;width:2.00px;height:68.21px;background:#e1e1e1;"></div>
<span class="t " style="top:841.22px;font-size:28px;color:#222222;-webkit-text-stroke:0.22px #222222;left:216.76px;transform-origin:0 50%;transform:scaleX(0.9687);">Discuss a blog section</span>
<span class="t " style="top:841.22px;font-size:28px;color:#222222;-webkit-text-stroke:0.22px #222222;left:1358.46px;transform-origin:0 50%;transform:scaleX(0.9907);">Веб-разработка</span>
<div class="" style="position:absolute;left:1629.10px;top:833.62px;width:40.00px;height:40.00px;background:#5aaf6e;border-radius:50%;"></div>
<span class="t " style="top:845.19px;font-size:19.3px;color:#f1f8f2;left:1635.32px;transform-origin:0 50%;transform:scaleX(1.1170);">ДК</span>
<span class="t " style="top:841.22px;font-size:28px;color:#222222;-webkit-text-stroke:0.22px #222222;left:1681.66px;transform-origin:0 50%;transform:scaleX(0.9697);">Дарья Ков...</span>
<span class="t " style="top:840.20px;font-size:29.2px;color:#222222;-webkit-text-stroke:0.22px #222222;right:573.32px;transform-origin:100% 50%;transform:scaleX(0.9623);">32ч</span>
<span class="t " style="top:840.20px;font-size:29.2px;color:#222222;-webkit-text-stroke:0.22px #222222;right:340.72px;transform-origin:100% 50%;transform:scaleX(0.9623);">26ч</span>
<span class="t " style="top:840.20px;font-size:29.2px;color:#222222;-webkit-text-stroke:0.22px #222222;right:39.32px;transform-origin:100% 50%;transform:scaleX(0.9813);">6ч</span>
<div class="" style="position:absolute;left:112.80px;top:961.53px;width:2553.40px;height:2.00px;background:#e1e1e1;"></div>
<div class="" style="position:absolute;left:1332.30px;top:891.73px;width:2.00px;height:68.20px;background:#e1e1e1;"></div>
<div class="" style="position:absolute;left:1599.00px;top:891.73px;width:2.00px;height:68.20px;background:#e1e1e1;"></div>
<div class="" style="position:absolute;left:1865.70px;top:891.73px;width:2.00px;height:68.20px;background:#e1e1e1;"></div>
<div class="" style="position:absolute;left:2132.80px;top:891.73px;width:2.00px;height:68.20px;background:#e1e1e1;"></div>
<div class="" style="position:absolute;left:2365.30px;top:891.73px;width:2.00px;height:68.20px;background:#e1e1e1;"></div>
<span class="t " style="top:913.03px;font-size:28px;color:#222222;-webkit-text-stroke:0.22px #222222;left:216.76px;transform-origin:0 50%;transform:scaleX(1.0030);">Mockups</span>
<span class="t " style="top:913.03px;font-size:28px;color:#222222;-webkit-text-stroke:0.22px #222222;left:1358.46px;transform-origin:0 50%;transform:scaleX(0.9907);">Веб-разработка</span>
<div class="" style="position:absolute;left:1629.10px;top:905.43px;width:40.00px;height:40.00px;background:#5aaf6e;border-radius:50%;"></div>
<span class="t " style="top:916.99px;font-size:19.3px;color:#f1f8f2;left:1635.32px;transform-origin:0 50%;transform:scaleX(1.1170);">ДК</span>
<span class="t " style="top:913.03px;font-size:28px;color:#222222;-webkit-text-stroke:0.22px #222222;left:1681.66px;transform-origin:0 50%;transform:scaleX(0.9697);">Дарья Ков...</span>
<span class="t " style="top:912.01px;font-size:29.2px;color:#222222;-webkit-text-stroke:0.22px #222222;right:573.32px;transform-origin:100% 50%;transform:scaleX(0.9623);">32ч</span>
<span class="t " style="top:912.01px;font-size:29.2px;color:#222222;-webkit-text-stroke:0.22px #222222;right:340.72px;transform-origin:100% 50%;transform:scaleX(0.9623);">16ч</span>
<span class="t " style="top:912.01px;font-size:29.2px;color:#222222;-webkit-text-stroke:0.22px #222222;right:39.32px;transform-origin:100% 50%;transform:scaleX(0.9623);">16ч</span>
<div class="" style="position:absolute;left:112.80px;top:963.53px;width:2553.40px;height:69.80px;background:#f2f2f2;"></div>
<div class="" style="position:absolute;left:112.80px;top:1033.34px;width:2553.40px;height:2.00px;background:#e1e1e1;"></div>
<svg style="position:absolute;left:180px;top:984.23px" width="26" height="26" viewBox="0 0 26 26"><polygon points="6.8,9.8 19.2,9.8 13,16.9" fill="#9b9b9b" stroke="#9b9b9b" stroke-width="1" stroke-linejoin="round"/></svg>
<div class="" style="position:absolute;left:229.10px;top:977.33px;width:40.00px;height:40.00px;background:#f08f8d;border-radius:50%;"></div>
<span class="t " style="top:988.70px;font-size:19.3px;color:#f1f8f2;left:235.32px;transform-origin:0 50%;transform:scaleX(1.0155);">ЕИ</span>
<span class="t " style="top:984.73px;font-size:28px;color:#1e1e1e;font-weight:700;left:280.36px;transform-origin:0 50%;transform:scaleX(0.9220);">Елена Иванова</span>
<span class="t " style="top:984.73px;font-size:28px;color:#999999;-webkit-text-stroke:0.22px #999999;left:500.16px;transform-origin:0 50%;transform:scaleX(0.9105);">5</span>
<span class="t " style="top:984.38px;font-size:27px;color:#939393;-webkit-text-stroke:0.22px #939393;left:1891.79px;transform-origin:0 50%;transform:scaleX(1.0209);">итого</span>
<span class="t " style="top:984.38px;font-size:27px;color:#939393;-webkit-text-stroke:0.22px #939393;left:2159.29px;transform-origin:0 50%;transform:scaleX(1.0164);">итого</span>
<span class="t " style="top:984.38px;font-size:27px;color:#939393;-webkit-text-stroke:0.22px #939393;left:2391.49px;transform-origin:0 50%;transform:scaleX(1.0224);">итого</span>
<span class="t " style="top:985.11px;font-size:29.2px;color:#1e1e1e;font-weight:700;right:570.12px;transform-origin:100% 50%;transform:scaleX(0.9618);">152ч</span>
<span class="t " style="top:985.11px;font-size:29.2px;color:#1e1e1e;font-weight:700;right:338.02px;transform-origin:100% 50%;transform:scaleX(0.9618);">153ч</span>
<span class="t " style="top:985.11px;font-size:29.2px;color:#d8433f;font-weight:700;right:38.42px;transform-origin:100% 50%;transform:scaleX(0.9694);">- 1ч</span>
<div class="" style="position:absolute;left:112.80px;top:1105.14px;width:2553.40px;height:2.00px;background:#e1e1e1;"></div>
<div class="" style="position:absolute;left:1332.30px;top:1035.34px;width:2.00px;height:68.21px;background:#e1e1e1;"></div>
<div class="" style="position:absolute;left:1599.00px;top:1035.34px;width:2.00px;height:68.21px;background:#e1e1e1;"></div>
<div class="" style="position:absolute;left:1865.70px;top:1035.34px;width:2.00px;height:68.21px;background:#e1e1e1;"></div>
<div class="" style="position:absolute;left:2132.80px;top:1035.34px;width:2.00px;height:68.21px;background:#e1e1e1;"></div>
<div class="" style="position:absolute;left:2365.30px;top:1035.34px;width:2.00px;height:68.21px;background:#e1e1e1;"></div>
<span class="t " style="top:1056.64px;font-size:28px;color:#222222;-webkit-text-stroke:0.22px #222222;left:216.76px;transform-origin:0 50%;transform:scaleX(0.9942);">Draw up requirements</span>
<span class="t " style="top:1056.64px;font-size:28px;color:#222222;-webkit-text-stroke:0.22px #222222;left:1358.46px;transform-origin:0 50%;transform:scaleX(0.9907);">Веб-разработка</span>
<div class="" style="position:absolute;left:1629.10px;top:1049.04px;width:40.00px;height:40.00px;background:#f08f8d;border-radius:50%;"></div>
<span class="t " style="top:1060.60px;font-size:19.3px;color:#f1f8f2;left:1635.32px;transform-origin:0 50%;transform:scaleX(1.0155);">ЕИ</span>
<span class="t " style="top:1056.64px;font-size:28px;color:#222222;-webkit-text-stroke:0.22px #222222;left:1681.66px;transform-origin:0 50%;transform:scaleX(0.9397);">Елена Ива...</span>
<span class="t " style="top:1055.62px;font-size:29.2px;color:#222222;-webkit-text-stroke:0.22px #222222;right:573.32px;transform-origin:100% 50%;transform:scaleX(0.9623);">24ч</span>
<span class="t " style="top:1055.62px;font-size:29.2px;color:#222222;-webkit-text-stroke:0.22px #222222;right:340.72px;transform-origin:100% 50%;transform:scaleX(0.9623);">28ч</span>
<span class="t " style="top:1055.62px;font-size:29.2px;color:#d8433f;-webkit-text-stroke:0.22px #d8433f;right:39.32px;transform-origin:100% 50%;transform:scaleX(0.9611);">- 4ч</span>
<div class="" style="position:absolute;left:112.80px;top:1176.95px;width:2553.40px;height:2.00px;background:#e1e1e1;"></div>
<div class="" style="position:absolute;left:1332.30px;top:1107.14px;width:2.00px;height:68.21px;background:#e1e1e1;"></div>
<div class="" style="position:absolute;left:1599.00px;top:1107.14px;width:2.00px;height:68.21px;background:#e1e1e1;"></div>
<div class="" style="position:absolute;left:1865.70px;top:1107.14px;width:2.00px;height:68.21px;background:#e1e1e1;"></div>
<div class="" style="position:absolute;left:2132.80px;top:1107.14px;width:2.00px;height:68.21px;background:#e1e1e1;"></div>
<div class="" style="position:absolute;left:2365.30px;top:1107.14px;width:2.00px;height:68.21px;background:#e1e1e1;"></div>
<span class="t " style="top:1128.44px;font-size:28px;color:#222222;-webkit-text-stroke:0.22px #222222;left:216.76px;transform-origin:0 50%;transform:scaleX(1.0004);">Indicate a product description</span>
<span class="t " style="top:1128.44px;font-size:28px;color:#222222;-webkit-text-stroke:0.22px #222222;left:1358.46px;transform-origin:0 50%;transform:scaleX(0.9907);">Веб-разработка</span>
<div class="" style="position:absolute;left:1629.10px;top:1120.84px;width:40.00px;height:40.00px;background:#f08f8d;border-radius:50%;"></div>
<span class="t " style="top:1132.41px;font-size:19.3px;color:#f1f8f2;left:1635.32px;transform-origin:0 50%;transform:scaleX(1.0155);">ЕИ</span>
<span class="t " style="top:1128.44px;font-size:28px;color:#222222;-webkit-text-stroke:0.22px #222222;left:1681.66px;transform-origin:0 50%;transform:scaleX(0.9397);">Елена Ива...</span>
<span class="t " style="top:1127.42px;font-size:29.2px;color:#222222;-webkit-text-stroke:0.22px #222222;right:573.32px;transform-origin:100% 50%;transform:scaleX(0.9623);">24ч</span>
<span class="t " style="top:1127.42px;font-size:29.2px;color:#222222;-webkit-text-stroke:0.22px #222222;right:340.72px;transform-origin:100% 50%;transform:scaleX(0.9623);">24ч</span>
<span class="t " style="top:1127.42px;font-size:29.2px;color:#222222;-webkit-text-stroke:0.22px #222222;right:39.32px;transform-origin:100% 50%;transform:scaleX(0.9813);">0ч</span>
<div class="" style="position:absolute;left:112.80px;top:1248.75px;width:2553.40px;height:2.00px;background:#e1e1e1;"></div>
<div class="" style="position:absolute;left:1332.30px;top:1178.95px;width:2.00px;height:68.20px;background:#e1e1e1;"></div>
<div class="" style="position:absolute;left:1599.00px;top:1178.95px;width:2.00px;height:68.20px;background:#e1e1e1;"></div>
<div class="" style="position:absolute;left:1865.70px;top:1178.95px;width:2.00px;height:68.20px;background:#e1e1e1;"></div>
<div class="" style="position:absolute;left:2132.80px;top:1178.95px;width:2.00px;height:68.20px;background:#e1e1e1;"></div>
<div class="" style="position:absolute;left:2365.30px;top:1178.95px;width:2.00px;height:68.20px;background:#e1e1e1;"></div>
<span class="t " style="top:1200.25px;font-size:28px;color:#222222;-webkit-text-stroke:0.22px #222222;left:216.76px;transform-origin:0 50%;transform:scaleX(1.0069);">Make up content</span>
<span class="t " style="top:1200.25px;font-size:28px;color:#222222;-webkit-text-stroke:0.22px #222222;left:1358.46px;transform-origin:0 50%;transform:scaleX(0.9907);">Веб-разработка</span>
<div class="" style="position:absolute;left:1629.10px;top:1192.65px;width:40.00px;height:40.00px;background:#f08f8d;border-radius:50%;"></div>
<span class="t " style="top:1204.21px;font-size:19.3px;color:#f1f8f2;left:1635.32px;transform-origin:0 50%;transform:scaleX(1.0155);">ЕИ</span>
<span class="t " style="top:1200.25px;font-size:28px;color:#222222;-webkit-text-stroke:0.22px #222222;left:1681.66px;transform-origin:0 50%;transform:scaleX(0.9397);">Елена Ива...</span>
<span class="t " style="top:1199.23px;font-size:29.2px;color:#222222;-webkit-text-stroke:0.22px #222222;right:573.32px;transform-origin:100% 50%;transform:scaleX(0.9623);">32ч</span>
<span class="t " style="top:1199.23px;font-size:29.2px;color:#222222;-webkit-text-stroke:0.22px #222222;right:340.72px;transform-origin:100% 50%;transform:scaleX(0.9623);">29ч</span>
<span class="t " style="top:1199.23px;font-size:29.2px;color:#222222;-webkit-text-stroke:0.22px #222222;right:39.32px;transform-origin:100% 50%;transform:scaleX(0.9813);">3ч</span>
<div class="" style="position:absolute;left:112.80px;top:1320.56px;width:2553.40px;height:2.00px;background:#e1e1e1;"></div>
<div class="" style="position:absolute;left:1332.30px;top:1250.75px;width:2.00px;height:68.21px;background:#e1e1e1;"></div>
<div class="" style="position:absolute;left:1599.00px;top:1250.75px;width:2.00px;height:68.21px;background:#e1e1e1;"></div>
<div class="" style="position:absolute;left:1865.70px;top:1250.75px;width:2.00px;height:68.21px;background:#e1e1e1;"></div>
<div class="" style="position:absolute;left:2132.80px;top:1250.75px;width:2.00px;height:68.21px;background:#e1e1e1;"></div>
<div class="" style="position:absolute;left:2365.30px;top:1250.75px;width:2.00px;height:68.21px;background:#e1e1e1;"></div>
<span class="t " style="top:1272.05px;font-size:28px;color:#222222;-webkit-text-stroke:0.22px #222222;left:216.76px;transform-origin:0 50%;transform:scaleX(0.9713);">Review</span>
<span class="t " style="top:1272.05px;font-size:28px;color:#222222;-webkit-text-stroke:0.22px #222222;left:1358.46px;transform-origin:0 50%;transform:scaleX(0.9907);">Веб-разработка</span>
<div class="" style="position:absolute;left:1629.10px;top:1264.45px;width:40.00px;height:40.00px;background:#f08f8d;border-radius:50%;"></div>
<span class="t " style="top:1276.02px;font-size:19.3px;color:#f1f8f2;left:1635.32px;transform-origin:0 50%;transform:scaleX(1.0155);">ЕИ</span>
<span class="t " style="top:1272.05px;font-size:28px;color:#222222;-webkit-text-stroke:0.22px #222222;left:1681.66px;transform-origin:0 50%;transform:scaleX(0.9397);">Елена Ива...</span>
<span class="t " style="top:1271.03px;font-size:29.2px;color:#222222;-webkit-text-stroke:0.22px #222222;right:573.32px;transform-origin:100% 50%;transform:scaleX(0.9623);">40ч</span>
<span class="t " style="top:1271.03px;font-size:29.2px;color:#222222;-webkit-text-stroke:0.22px #222222;right:340.72px;transform-origin:100% 50%;transform:scaleX(0.9623);">40ч</span>
<span class="t " style="top:1271.03px;font-size:29.2px;color:#222222;-webkit-text-stroke:0.22px #222222;right:39.32px;transform-origin:100% 50%;transform:scaleX(0.9813);">0ч</span>
<div class="" style="position:absolute;left:112.80px;top:1392.36px;width:2553.40px;height:2.00px;background:#e1e1e1;"></div>
<div class="" style="position:absolute;left:1332.30px;top:1322.56px;width:2.00px;height:68.21px;background:#e1e1e1;"></div>
<div class="" style="position:absolute;left:1599.00px;top:1322.56px;width:2.00px;height:68.21px;background:#e1e1e1;"></div>
<div class="" style="position:absolute;left:1865.70px;top:1322.56px;width:2.00px;height:68.21px;background:#e1e1e1;"></div>
<div class="" style="position:absolute;left:2132.80px;top:1322.56px;width:2.00px;height:68.21px;background:#e1e1e1;"></div>
<div class="" style="position:absolute;left:2365.30px;top:1322.56px;width:2.00px;height:68.21px;background:#e1e1e1;"></div>
<span class="t " style="top:1343.86px;font-size:28px;color:#222222;-webkit-text-stroke:0.22px #222222;left:216.76px;transform-origin:0 50%;transform:scaleX(0.9977);">Create prototypes</span>
<span class="t " style="top:1343.86px;font-size:28px;color:#222222;-webkit-text-stroke:0.22px #222222;left:1358.46px;transform-origin:0 50%;transform:scaleX(0.9907);">Веб-разработка</span>
<div class="" style="position:absolute;left:1629.10px;top:1336.26px;width:40.00px;height:40.00px;background:#f08f8d;border-radius:50%;"></div>
<span class="t " style="top:1347.82px;font-size:19.3px;color:#f1f8f2;left:1635.32px;transform-origin:0 50%;transform:scaleX(1.0155);">ЕИ</span>
<span class="t " style="top:1343.86px;font-size:28px;color:#222222;-webkit-text-stroke:0.22px #222222;left:1681.66px;transform-origin:0 50%;transform:scaleX(0.9397);">Елена Ива...</span>
<span class="t " style="top:1342.84px;font-size:29.2px;color:#222222;-webkit-text-stroke:0.22px #222222;right:573.32px;transform-origin:100% 50%;transform:scaleX(0.9623);">32ч</span>
<span class="t " style="top:1342.84px;font-size:29.2px;color:#222222;-webkit-text-stroke:0.22px #222222;right:340.72px;transform-origin:100% 50%;transform:scaleX(0.9623);">32ч</span>
<span class="t " style="top:1342.84px;font-size:29.2px;color:#222222;-webkit-text-stroke:0.22px #222222;right:39.32px;transform-origin:100% 50%;transform:scaleX(0.9813);">0ч</span>
<div class="" style="position:absolute;left:112.80px;top:1394.36px;width:2553.40px;height:69.81px;background:#f2f2f2;"></div>
<div class="" style="position:absolute;left:112.80px;top:1464.17px;width:2553.40px;height:2.00px;background:#e1e1e1;"></div>
<svg style="position:absolute;left:180px;top:1415.06px" width="26" height="26" viewBox="0 0 26 26"><polygon points="6.8,9.8 19.2,9.8 13,16.9" fill="#9b9b9b" stroke="#9b9b9b" stroke-width="1" stroke-linejoin="round"/></svg>
<div class="" style="position:absolute;left:229.10px;top:1408.16px;width:40.00px;height:40.00px;background:#68c3d5;border-radius:50%;"></div>
<span class="t " style="top:1419.53px;font-size:19.3px;color:#f1f8f2;left:235.32px;transform-origin:0 50%;transform:scaleX(0.9107);">ЖТ</span>
<span class="t " style="top:1415.56px;font-size:28px;color:#1e1e1e;font-weight:700;left:280.16px;transform-origin:0 50%;transform:scaleX(0.9431);">Жанна Таранько</span>
<span class="t " style="top:1415.56px;font-size:28px;color:#999999;-webkit-text-stroke:0.22px #999999;left:519.16px;transform-origin:0 50%;transform:scaleX(1.0389);">4</span>
<span class="t " style="top:1415.21px;font-size:27px;color:#939393;-webkit-text-stroke:0.22px #939393;left:1891.79px;transform-origin:0 50%;transform:scaleX(1.0209);">итого</span>
<span class="t " style="top:1415.21px;font-size:27px;color:#939393;-webkit-text-stroke:0.22px #939393;left:2159.29px;transform-origin:0 50%;transform:scaleX(1.0164);">итого</span>
<span class="t " style="top:1415.21px;font-size:27px;color:#939393;-webkit-text-stroke:0.22px #939393;left:2391.49px;transform-origin:0 50%;transform:scaleX(1.0224);">итого</span>
<span class="t " style="top:1415.94px;font-size:29.2px;color:#1e1e1e;font-weight:700;right:570.12px;transform-origin:100% 50%;transform:scaleX(0.9618);">144ч</span>
<span class="t " style="top:1415.94px;font-size:29.2px;color:#1e1e1e;font-weight:700;right:338.02px;transform-origin:100% 50%;transform:scaleX(0.9618);">123ч</span>
<span class="t " style="top:1415.94px;font-size:29.2px;color:#1e1e1e;font-weight:700;right:38.42px;transform-origin:100% 50%;transform:scaleX(0.9705);">21ч</span>
<div class="" style="position:absolute;left:112.80px;top:1535.97px;width:2553.40px;height:2.00px;background:#e1e1e1;"></div>
<div class="" style="position:absolute;left:1332.30px;top:1466.17px;width:2.00px;height:68.21px;background:#e1e1e1;"></div>
<div class="" style="position:absolute;left:1599.00px;top:1466.17px;width:2.00px;height:68.21px;background:#e1e1e1;"></div>
<div class="" style="position:absolute;left:1865.70px;top:1466.17px;width:2.00px;height:68.21px;background:#e1e1e1;"></div>
<div class="" style="position:absolute;left:2132.80px;top:1466.17px;width:2.00px;height:68.21px;background:#e1e1e1;"></div>
<div class="" style="position:absolute;left:2365.30px;top:1466.17px;width:2.00px;height:68.21px;background:#e1e1e1;"></div>
<span class="t " style="top:1487.47px;font-size:28px;color:#222222;-webkit-text-stroke:0.22px #222222;left:216.76px;transform-origin:0 50%;transform:scaleX(0.9794);">Establish a content hierarchy</span>
<span class="t " style="top:1487.47px;font-size:28px;color:#222222;-webkit-text-stroke:0.22px #222222;left:1358.46px;transform-origin:0 50%;transform:scaleX(0.9907);">Веб-разработка</span>
<div class="" style="position:absolute;left:1629.10px;top:1479.87px;width:40.00px;height:40.00px;background:#68c3d5;border-radius:50%;"></div>
<span class="t " style="top:1491.43px;font-size:19.3px;color:#f1f8f2;left:1635.32px;transform-origin:0 50%;transform:scaleX(0.9107);">ЖТ</span>
<span class="t " style="top:1487.47px;font-size:28px;color:#222222;-webkit-text-stroke:0.22px #222222;left:1681.66px;transform-origin:0 50%;transform:scaleX(0.9462);">Жанна Та...</span>
<span class="t " style="top:1486.45px;font-size:29.2px;color:#222222;-webkit-text-stroke:0.22px #222222;right:573.32px;transform-origin:100% 50%;transform:scaleX(0.9623);">32ч</span>
<span class="t " style="top:1486.45px;font-size:29.2px;color:#222222;-webkit-text-stroke:0.22px #222222;right:340.72px;transform-origin:100% 50%;transform:scaleX(0.9623);">34ч</span>
<span class="t " style="top:1486.45px;font-size:29.2px;color:#d8433f;-webkit-text-stroke:0.22px #d8433f;right:39.32px;transform-origin:100% 50%;transform:scaleX(0.9611);">- 2ч</span>
<div class="" style="position:absolute;left:112.80px;top:1607.78px;width:2553.40px;height:2.00px;background:#e1e1e1;"></div>
<div class="" style="position:absolute;left:1332.30px;top:1537.97px;width:2.00px;height:68.20px;background:#e1e1e1;"></div>
<div class="" style="position:absolute;left:1599.00px;top:1537.97px;width:2.00px;height:68.20px;background:#e1e1e1;"></div>
<div class="" style="position:absolute;left:1865.70px;top:1537.97px;width:2.00px;height:68.20px;background:#e1e1e1;"></div>
<div class="" style="position:absolute;left:2132.80px;top:1537.97px;width:2.00px;height:68.20px;background:#e1e1e1;"></div>
<div class="" style="position:absolute;left:2365.30px;top:1537.97px;width:2.00px;height:68.20px;background:#e1e1e1;"></div>
<div class="" style="position:absolute;left:1629.10px;top:1551.67px;width:40.00px;height:40.00px;background:#68c3d5;border-radius:50%;"></div>
<div class="" style="position:absolute;left:1176.00px;top:1418.00px;width:329.80px;height:77.80px;background:#00524c;"></div>
<span class="t wm" style="top:1432.82px;font-size:49px;color:#fff;font-weight:700;left:1202.13px;transform-origin:0 50%;transform:scaleX(1.0088);">GANTTPRO</span>
</div></body></html>
